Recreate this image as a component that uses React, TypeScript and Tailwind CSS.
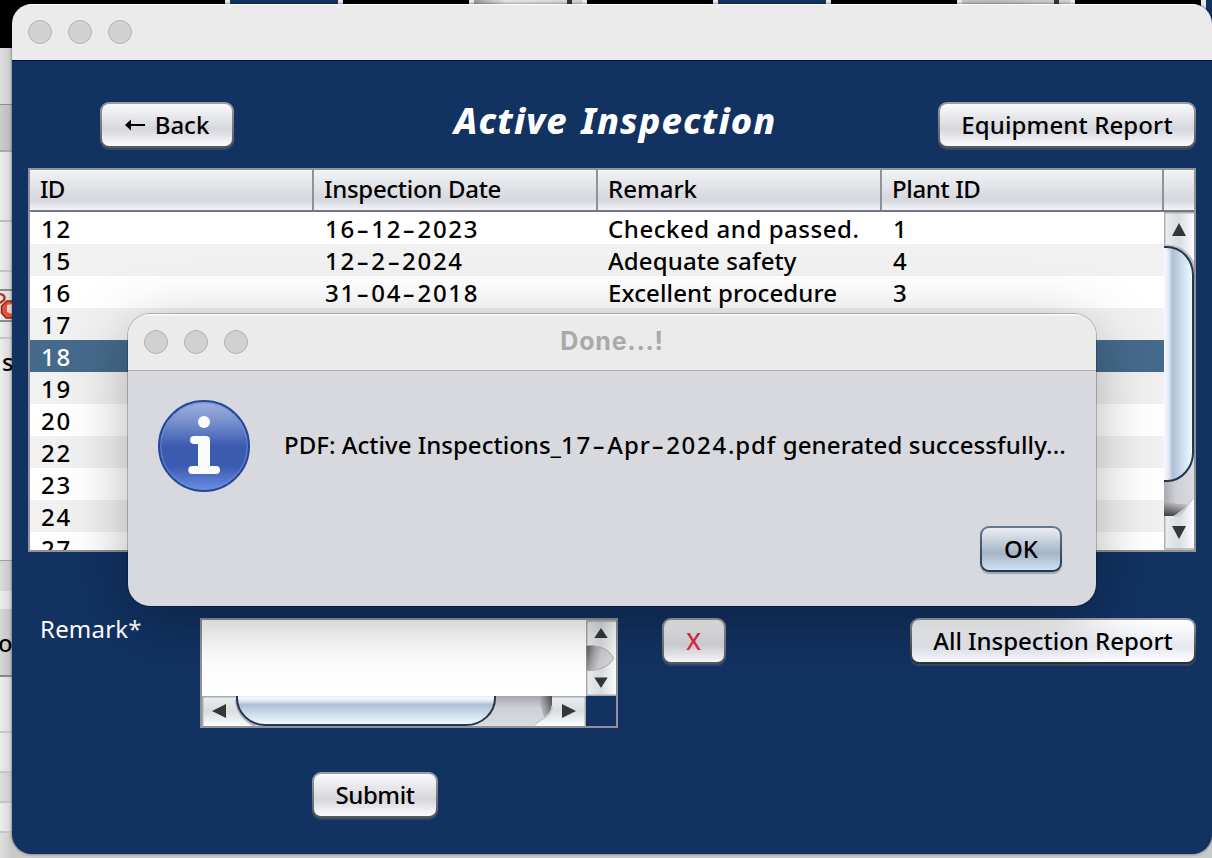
import type { ReactNode } from "react";

const rows = [
  { id: "12", date: "16-12-2023", remark: "Checked and passed.", plant: "1" },
  { id: "15", date: "12-2-2024", remark: "Adequate safety", plant: "4" },
  { id: "16", date: "31-04-2018", remark: "Excellent procedure", plant: "3" },
  { id: "17" },
  { id: "18", selected: true },
  { id: "19" },
  { id: "20" },
  { id: "22" },
  { id: "23" },
  { id: "24" },
  { id: "27" },
] as { id: string; date?: string; remark?: string; plant?: string; selected?: boolean }[];

function Lights() {
  return (
    <div className="flex gap-4">
      {[0, 1, 2].map((i) => (
        <span key={i} className="size-6 rounded-full border border-[#b2b2b2] bg-[#d1d1d1]" />
      ))}
    </div>
  );
}

function Button({ className, children }: { className: string; children: ReactNode }) {
  return (
    <button
      className={`flex h-[46px] shrink-0 items-center justify-center rounded-[9px] bg-linear-to-b p-[2px] shadow-[0_2px_1px_rgba(90,105,115,0.45)] ${className}`}
    >
      {children}
    </button>
  );
}

const face =
  "flex size-full items-center justify-center whitespace-pre rounded-[7px] bg-linear-to-b from-[#fafafc] from-0% via-[#d6d7dd] via-60% to-[#fbfbff] to-100% pb-px";

/* Date-like text whose hyphens take the width of a digit. */
function Wide({ text }: { text: string }) {
  return (
    <span>
      {text.split(/(-|\d+)/).map((part, i) =>
        part === "-" ? (
          <span key={i} className="-ml-[1px] mr-[1px] inline-block w-[15.400px] scale-x-[1.6] text-center">
            -
          </span>
        ) : (
          <span key={i} className={/\d/.test(part) ? "tracking-[1.700px]" : "tracking-[0.900px]"}>
            {part}
          </span>
        ),
      )}
    </span>
  );
}

function VScroll() {
  return (
    <svg width="30" height="338" viewBox="0 0 30 338" className="shrink-0">
      <defs>
        <linearGradient id="vb"><stop offset="0" stopColor="#eceef0" /><stop offset=".5" stopColor="#d9dde0" /><stop offset="1" stopColor="#fbfdff" /></linearGradient>
        <linearGradient id="vt"><stop offset="0" stopColor="#9fb2c8" /><stop offset=".04" stopColor="#f6f8fc" /><stop offset=".17" stopColor="#e6ecf4" /><stop offset=".32" stopColor="#afbfd3" /><stop offset=".65" stopColor="#cfdfee" /><stop offset="1" stopColor="#eefeff" /></linearGradient>
        <linearGradient id="vtrack"><stop offset="0" stopColor="#a9a9b0" /><stop offset=".4" stopColor="#cfd0d5" /><stop offset="1" stopColor="#dadbe0" /></linearGradient>
        <linearGradient id="vd" x1=".1" x2=".5" y1="1" y2="0"><stop offset="0" stopColor="#3c3c40" /><stop offset=".4" stopColor="#77777b" /><stop offset="1" stopColor="#cdced3" /></linearGradient>
      </defs>
      <rect width="30" height="338" fill="url(#vtrack)" />
      <rect width="30" height="50" fill="url(#vb)" />
      <path d="M0 289Q15 293 26 292L10 304H0Z" fill="url(#vd)" />
      <path d="M0 304H10C21 304 23 288 28 288H30V338H0Z" fill="url(#vb)" />
      <path d="M10 304C21 304 23 290 28 288" fill="none" stroke="#c4c6ca" strokeWidth="1.5" />
      <path d="M.7 34V.8H30M.7 304V337H30" fill="none" stroke="#aeb1b5" strokeWidth="1.5" />
      <path d="M0 33Q20 31 30 50V60Q19 35 0 36Z" fill="#b9bdc1" />
      <path d="M-1 35H2C19 35 29 49 29 63V241C29 255 18 269 3 269H-1Z" fill="url(#vt)" stroke="#24364f" strokeWidth="2" />
      <path d="M15 11L22 24H8ZM15 327L22 314H8Z" fill="#363636" />
    </svg>
  );
}

function SmallVScroll() {
  return (
    <svg width="30" height="76" viewBox="0 0 30 76" className="shrink-0">
      <defs>
        <linearGradient id="sd" x1="0" x2="1" y1="0" y2=".25"><stop offset="0" stopColor="#56565a" /><stop offset=".35" stopColor="#a5a5a9" /><stop offset=".6" stopColor="#c9c9ce" /><stop offset="1" stopColor="#d6d6db" /></linearGradient>
      </defs>
      <rect width="30" height="76" fill="url(#vb)" />
      <path d="M.7 76V1H30M0 75.3H30" fill="none" stroke="#a7aaae" strokeWidth="1.5" />
      <path d="M0 25.5C16 25 24 31 27.5 38C24 45 16 51 0 50.5Z" fill="url(#sd)" stroke="#a9a9ad" strokeWidth="1" />
      <path d="M15 8L21.700 18H8.300ZM15 68L21.700 57.500H8.300Z" fill="#363636" />
    </svg>
  );
}

function HScroll() {
  return (
    <svg width="384" height="30" viewBox="0 0 384 30" className="shrink-0">
      <defs>
        <linearGradient id="hb" x2="0" y2="1"><stop offset="0" stopColor="#eceef0" /><stop offset=".5" stopColor="#d9dde0" /><stop offset="1" stopColor="#fbfdff" /></linearGradient>
        <linearGradient id="ht" x2="0" y2="1"><stop offset="0" stopColor="#b5c3d4" /><stop offset=".06" stopColor="#f6f8fc" /><stop offset=".17" stopColor="#e9eef6" /><stop offset=".32" stopColor="#afbfd3" /><stop offset=".65" stopColor="#cfdfee" /><stop offset="1" stopColor="#eefeff" /></linearGradient>
        <linearGradient id="htrack" x2="0" y2="1"><stop offset="0" stopColor="#a5a5ab" /><stop offset=".4" stopColor="#cfd0d5" /><stop offset="1" stopColor="#dadbe0" /></linearGradient>
        <linearGradient id="hd" x1="0" x2="1" y1=".5" y2="0"><stop offset="0" stopColor="#cdced3" /><stop offset="1" stopColor="#4a4a4e" /></linearGradient>
      </defs>
      <rect width="384" height="30" fill="url(#htrack)" />
      <path d="M0 0H34Q35 22 52 30H0Z" fill="url(#hb)" />
      <path d="M34 3Q34 20 53 30" fill="none" stroke="#aeb2b7" strokeWidth="2" />
      <path d="M336 0H350V14L342 22Z" fill="url(#hd)" />
      <path d="M350 0V10C350 21 334 24 334 30H384V0Z" fill="url(#hb)" />
      <path d="M350 10C350 21 336 24 334 28" fill="none" stroke="#c4c6ca" strokeWidth="1.5" />
      <path d="M0 .700H34M.700 0V30M350 .700H384M383.300 0V30" fill="none" stroke="#a7aaae" strokeWidth="1.500" />
      <path d="M35 -1V2C35 17 48 29 63 29H264C280 29 293 17 293 2V-1Z" fill="url(#ht)" stroke="#24364f" strokeWidth="2" />
      <path d="M10 15L24 8V22ZM374 15L360 8V22Z" fill="#363636" />
    </svg>
  );
}

function InfoIcon() {
  return (
    <svg width="92" height="92" viewBox="0 0 92 92" className="shrink-0">
      <defs>
        <linearGradient id="info" x2="0" y2="1"><stop offset="0" stopColor="#9fb1dc" /><stop offset=".22" stopColor="#7a92cf" /><stop offset=".5" stopColor="#3d5cb0" /><stop offset=".72" stopColor="#3b5bb0" /><stop offset="1" stopColor="#6d8fe8" /></linearGradient>
      </defs>
      <circle cx="46" cy="46" r="45" fill="url(#info)" stroke="#254795" strokeWidth="2" />
      <circle cx="46" cy="46" r="43.300" fill="none" stroke="#6f8dd8" strokeOpacity=".6" strokeWidth="1.400" />
      <circle cx="46" cy="22" r="6" fill="#fbfbfb" />
      <path d="M36 36H48Q52 36 52 40V66H58A4 4 0 0 1 58 74H34.300A4 4 0 0 1 34.300 66H40V44H36A4 4 0 0 1 36 36Z" fill="#fbfbfb" />
    </svg>
  );
}

function Desktop() {
  return (
    <div className="flex h-full flex-col bg-[#c9c9c9]">
      <div className="flex h-12 shrink-0 bg-black">
        <div className="ml-[225px] h-3 w-[118px] border-x-[5px] border-[#e8e8e8] bg-[#123262]" />
        <div className="ml-[126px] h-3 w-[118px] border-x-[5px] border-[#e8e8e8] bg-linear-to-r from-[#9a9a9a] via-[#e4e4e4] via-30% to-[#d0d0d0]">
          <div className="ml-[93px] h-3 w-[5px] bg-[#333]" />
        </div>
        <div className="ml-[126px] h-3 w-[118px] border-x-[5px] border-[#e8e8e8] bg-[#123262]" />
        <div className="ml-[126px] h-3 w-[118px] border-x-[5px] border-[#e8e8e8] bg-linear-to-r from-[#c0c0c0] via-[#bababa] via-30% to-[#d0d0d0]">
          <div className="ml-[92px] h-3 w-[5px] bg-[#333]" />
        </div>
        <div className="ml-[126px] h-9 flex-1 border-l-[5px] border-[#e8e8e8] bg-[#123262]" />
      </div>
      <div className="flex w-3 flex-1 flex-col overflow-hidden bg-linear-to-r from-[#eeeeee] to-[#d4d4d4] font-['Noto_Sans'] text-2xl">
        <div className="h-[57px] shrink-0 border-b border-[#8f8f8f] bg-linear-to-r from-[#dedede] to-[#c9c9c9]" />
        <div className="h-[47px] shrink-0 border-b-2 border-[#aaa] bg-linear-to-r from-[#cecece] to-[#b8b8b8]" />
        <div className="h-[70px] shrink-0 border-b-2 border-[#bbb]" />
        <div className="h-[50px] shrink-0 border-b-2 border-[#c2c2c2]" />
        <div className="flex h-[50px] shrink-0 flex-col border-b-2 border-[#888] pt-[17px]">
          <div className="h-[31px] border-t-2 border-[#888]">
            <svg width="12" height="29" viewBox="0 0 12 29">
              <path d="M0 3Q6 4 4 9L0 12" fill="none" stroke="#b63321" strokeWidth="2.500" />
              <path d="M13 10H7L1.500 15V22L6 27H13" fill="#df5339" stroke="#8a2719" strokeWidth="1.500" />
              <path d="M7 14V21L12 23V13Z" fill="#f2d5cd" />
            </svg>
          </div>
        </div>
        <div className="h-[17px] shrink-0 border-b-2 border-[#c5c5c5]" />
        <div className="h-[222px] shrink-0 border-b border-[#a0a0a0] pl-[2px] leading-[46px]">s</div>
        <div className="h-[30px] shrink-0 bg-linear-to-r from-[#dcdcdc] to-[#c4c4c4]" />
        <div className="h-[18px] shrink-0" />
        <div className="h-[68px] shrink-0 border-b-2 border-[#888] bg-linear-to-r from-[#d8d8d8] to-[#bdbdbd] leading-[68px]">
          <span className="-ml-[2px]">o</span>
        </div>
        <div className="h-[56px] shrink-0 border-b-2 border-[#c5c5c5]" />
        <div className="h-[40px] shrink-0 border-b-2 border-[#c5c5c5]" />
        <div className="h-[30px] shrink-0 border-b-2 border-[#c5c5c5] bg-linear-to-r from-[#dedede] to-[#c9c9c9]" />
        <div className="h-[30px] shrink-0 border-b-2 border-[#c5c5c5]" />
        <div className="flex-1 bg-linear-to-r from-[#dedede] to-[#c9c9c9]" />
      </div>
    </div>
  );
}

function Dialog() {
  return (
    <div className="absolute left-[128px] top-[314px] flex h-[292px] w-[968px] flex-col overflow-hidden rounded-[22px] bg-[#d8d9df]">
      <div className="grid h-[57px] shrink-0 grid-cols-[1fr_auto_1fr] items-center border-b border-[#b0b1b6] bg-[#ebebeb] px-4 shadow-[inset_0_2px_0_#f6f6f6]">
        <Lights />
        <h2 className="-mt-[3px] font-['Inter'] text-[25px] font-bold tracking-[0.8px] text-[#a9a9a9]">Done...!</h2>
      </div>
      <div className="flex items-center pl-[30px] pt-[29px]">
        <InfoIcon />
        <p className="-mt-[2px] ml-[34px] whitespace-nowrap">
          <span className="tracking-[0.02px]">PDF: Active Inspections_</span>
          <Wide text="17-Apr-2024.pdf" />
          <span className="tracking-[0.12px]"> generated successfully...</span>
        </p>
      </div>
      <div className="flex justify-end pr-[34px] pt-[34px]">
        <Button className="w-[82px] from-[#68788f] to-[#24364b]">
          <span className="flex size-full items-center justify-center rounded-[7px] bg-linear-to-b from-[#eceef4] via-[#a4b4c5] via-60% to-[#cfe2f5] pb-px">OK</span>
        </Button>
      </div>
    </div>
  );
}

export default function App() {
  return (
    <div className="relative h-[858px] w-[1212px] overflow-hidden font-['Noto_Sans',sans-serif] text-[24px] font-medium leading-8 text-black">
      <Desktop />
      <main className="absolute left-3 top-1 flex h-[850px] w-[1200px] flex-col overflow-hidden rounded-[20px] bg-[#123262] shadow-[0_0_3px_rgba(0,0,0,0.6)]">
        <header className="flex h-[56px] shrink-0 items-center bg-[#ebebeb] px-4 shadow-[inset_0_1px_0_#fff,0_1px_0_#000d45]">
          <Lights />
        </header>
        <section className="flex flex-1 flex-col px-4 pt-[42px]">
          <div className="flex h-[46px] pl-[72px]">
            <Button className="w-[134px] from-[#9b9da2] to-[#55585d]">
              <span className={face}>
                <svg width="20" height="12" viewBox="0 0 20 12" className="mr-[10px]">
                  <path d="M5 6H20" stroke="black" strokeWidth="2" />
                  <path d="M0 6L6 .5V11.500Z" />
                </svg>
                Back
              </span>
            </Button>
            <h1 className="-mt-[3px] ml-[220px] mr-auto text-[36px] font-extrabold italic leading-[44px] tracking-[1.100px] [word-spacing:3px] text-white">Active Inspection</h1>
            <Button className="w-[258px] from-[#9b9da2] to-[#55585d]">
              <span className={`${face} tracking-[0.12px]`}>Equipment Report</span>
            </Button>
          </div>

          <div className="mt-5 flex h-[384px] shrink-0 flex-col border-2 border-[#8f9299] bg-white">
            <div className="grid h-[42px] shrink-0 grid-cols-[284px_284px_284px_282px_1fr] border-b-2 border-[#727780] bg-linear-to-b from-[#f2f3f6] via-[#d6d7dd] via-75% to-[#f3f4fb] leading-[38px]">
              <div className="border-r-2 border-[#8f9299] pl-[10px] tracking-[-0.800px]">ID</div>
              <div className="border-r-2 border-[#8f9299] pl-[10px] tracking-[-0.300px]">Inspection Date</div>
              <div className="border-r-2 border-[#8f9299] pl-[10px]">Remark</div>
              <div className="border-r-2 border-[#8f9299] pl-[10px] tracking-[-0.350px]">Plant ID</div>
            </div>
            <div className="flex min-h-0 flex-1">
              <div className="flex-1 overflow-hidden">
                {rows.map((r) => (
                  <div
                    key={r.id}
                    className={`grid h-8 grid-cols-[284px_284px_284px_1fr] leading-[34px] ${r.selected ? "bg-[#456a8b] text-white" : "odd:bg-white even:bg-[#f1f1f1]"}`}
                  >
                    <span className="pl-[11px] tracking-[1.8px]">{r.id}</span>
                    <span className="pl-[11px]">{r.date && <Wide text={r.date} />}</span>
                    <span className={r.id === "12" ? "pl-[10px] tracking-[0.55px]" : "pl-[10px] tracking-[0.12px]"}>{r.remark}</span>
                    <span className="pl-[11px]">{r.plant}</span>
                  </div>
                ))}
              </div>
              <VScroll />
            </div>
          </div>

          <div className="mt-[66px] flex h-[110px] shrink-0">
            <label className="-mt-[5px] w-[172px] pl-3 font-normal tracking-[0.2px] text-white">Remark*</label>
            <div className="flex w-[418px] shrink-0 flex-col border-2 border-[#8f9299]">
              <div className="flex h-[76px]">
                <div className="flex-1 bg-white" />
                <SmallVScroll />
              </div>
              <HScroll />
            </div>
            <div className="flex flex-1 justify-between pl-[44px]">
              <Button className="w-16 from-[#9b9da2] to-[#55585d]">
                <span className={`${face} pr-px text-[#e32a3f]`}>X</span>
              </Button>
              <Button className="w-[286px] from-[#9b9da2] to-[#2b2e33]">
                <span className="flex size-full items-center justify-center rounded-[7px] bg-linear-to-b from-white via-[#e5e8f1] via-65% to-white pb-px tracking-[-0.030px]">All Inspection Report</span>
              </Button>
            </div>
          </div>
          <div className="mt-[44px] flex pl-[284px]">
            <Button className="w-[126px] from-[#9b9da2] to-[#55585d]">
              <span className={`${face} tracking-[-0.450px]`}>Submit</span>
            </Button>
          </div>
        </section>
        <div className="pointer-events-none absolute left-[116px] top-[310px] h-[292px] w-[968px] rounded-[22px] shadow-[0_0_0_1px_rgba(0,0,0,0.22),0_14px_64px_-4px_rgba(0,0,0,0.34)]" />
      </main>
      <Dialog />
    </div>
  );
}
